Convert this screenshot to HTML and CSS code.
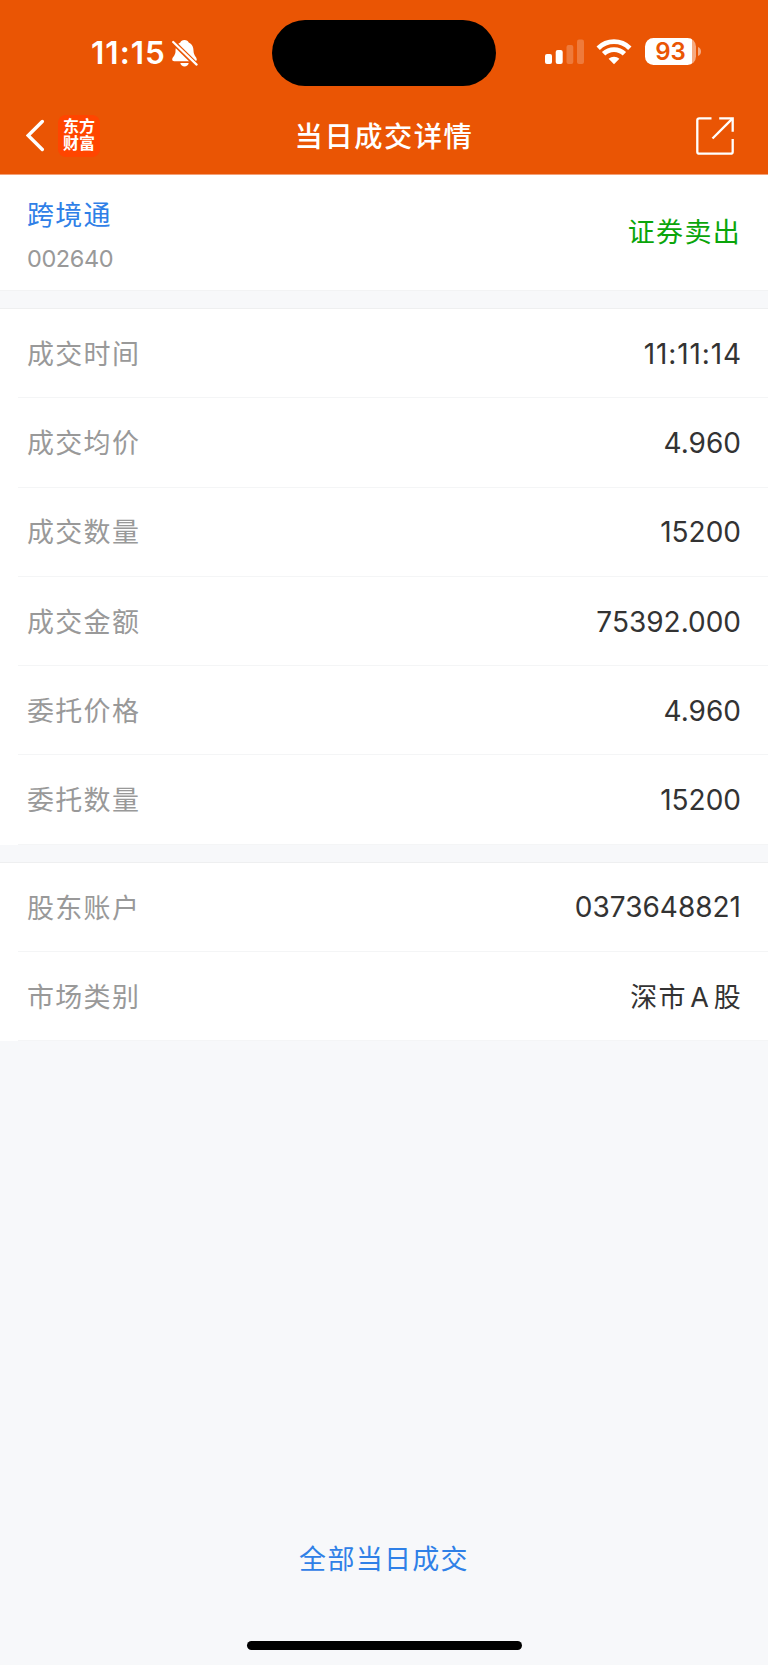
FILE: index.html
```html
<!DOCTYPE html>
<html lang="zh-CN">
<head>
    <meta charset="UTF-8">
    <title>当日成交详情</title>
    <link rel="stylesheet" href="styles.css">
</head>
<body>
<div class="page">
    <header class="header">
        <div class="status">
            <div class="status-left">
                <span class="time">11:15</span>
                <svg class="bell" width="27" height="28" viewBox="0 0 27 28">
                    <path fill="#fff" d="M13.500 1C15.700 1 17.200 2 17.700 3.500C21.400 5 22.500 8.500 22.600 12.500C22.700 16.500 25.800 18.200 25.800 20.500C25.800 21.700 25 22.200 23.800 22.200H3.200C2 22.200 1.200 21.700 1.200 20.500C1.200 18.200 4.400 16.500 4.500 12.500C4.600 8.500 5.600 5 9.300 3.500C9.800 2 11.300 1 13.500 1Z"/>
                    <path fill="#fff" d="M9.300 24H17.700C17.300 26.200 15.600 27.400 13.500 27.400C11.400 27.400 9.700 26.200 9.300 24Z"/>
                    <path stroke="#ea5504" stroke-width="5" d="M0 1L27 27.600"/>
                    <path stroke="#fff" stroke-width="2.200" stroke-linecap="round" d="M2.200 3L25.600 25.600"/>
                </svg>
            </div>
            <div class="island"></div>
            <div class="status-right">
                <svg class="signal" width="40" height="26" viewBox="0 0 40 26">
                    <rect x="0" y="15" width="7" height="10" rx="2" fill="#fff"/>
                    <rect x="10.700" y="11" width="7" height="14" rx="2" fill="#fff"/>
                    <rect x="21.500" y="6" width="6.800" height="19" rx="2" fill="#fff" opacity=".22"/>
                    <rect x="32" y=".5" width="7" height="24.500" rx="2" fill="#fff" opacity=".22"/>
                </svg>
                <svg class="wifi" width="36" height="26" viewBox="0 0 36 26">
                    <g fill="none" stroke="#fff" stroke-width="4.800">
                        <path d="M2.200 9.200A22.500 22.500 0 0 1 33.800 9.200"/>
                        <path d="M7.600 14.800A14.800 14.800 0 0 1 28.400 14.800"/>
                    </g>
                    <path fill="#fff" d="M18 25.200L12.600 19.800C15.600 16.900 20.400 16.900 23.400 19.800Z"/>
                </svg>
                <div class="battery"><span>93</span></div>
                <svg class="nub" width="4" height="9" viewBox="0 0 4 9">
                    <path fill="#fff" opacity=".5" d="M0 0C4 1.500 4 7.500 0 9Z"/>
                </svg>
            </div>
        </div>
        <div class="nav">
            <div class="nav-left">
                <svg width="20" height="34" viewBox="0 0 20 34">
                    <path fill="none" stroke="#fff" stroke-width="3.400" stroke-linecap="round" d="M16.300 2.500L2.200 16.500L16.300 30.500"/>
                </svg>
                <div class="logo"><span>东方</span><span>财富</span></div>
            </div>
            <h1>当日成交详情</h1>
            <svg class="share" width="38" height="38" viewBox="0 0 38 38">
                <g fill="none" stroke="#fff" stroke-width="2.300">
                    <path d="M15.500 1.300H3.300Q1.300 1.300 1.300 3.300V34.700Q1.300 36.700 3.300 36.700H34.700Q36.700 36.700 36.700 34.700V22"/>
                    <path d="M23.200 1.300H36.700V14.800"/>
                    <path d="M36.400 1.600L16.500 21.500"/>
                </g>
            </svg>
        </div>
    </header>

    <div class="stock">
        <div>
            <div class="name">跨境通</div>
            <div class="code">002640</div>
        </div>
        <div class="side">证券卖出</div>
    </div>

    <ul class="list">
        <li><label>成交时间</label><span class="clock">11:11:14</span></li>
        <li><label>成交均价</label><span>4.960</span></li>
        <li><label>成交数量</label><span>15200</span></li>
        <li><label>成交金额</label><span>75392.000</span></li>
        <li><label>委托价格</label><span>4.960</span></li>
        <li><label>委托数量</label><span>15200</span></li>
    </ul>

    <ul class="list">
        <li><label>股东账户</label><span>0373648821</span></li>
        <li><label>市场类别</label><span class="cn">深市<i>A</i>股</span></li>
    </ul>

    <a class="all" href="javascript:;">全部当日成交</a>
    <div class="home"></div>
</div>
</body>
</html>
```
FILE: styles.css
```css
*{
    margin: 0;
    padding: 0;
    box-sizing: border-box;
}
body{
    font-family: Inter, "Noto Sans CJK SC", sans-serif;
    background-color: #f7f8fa;
}
.page{
    display: flex;
    flex-direction: column;
    height: 1665px;
    overflow: hidden;
}
/*顶部*/
.header{
    height: 175px;
    background-color: #ea5504;
    border-bottom: 1px solid #f3a077;
    color: #fff;
}
.status{
    display: grid;
    grid-template-columns: 272px 224px 272px;
    height: 106px;
    padding-top: 20px;
}
.status-left{
    display: flex;
    align-items: center;
    height: 66px;
    padding-left: 91px;
}
.time{
    width: 80px;
    font-size: 31.500px;
    font-weight: 600;
    line-height: 38px;
    letter-spacing: 1px;
}
.island{
    height: 66px;
    border-radius: 33px;
    background-color: #000;
}
.status-right{
    display: flex;
    align-items: center;
    height: 63px;
    padding-left: 49px;
}
.wifi{
    margin-left: 11px;
}
.battery{
    width: 51px;
    height: 27px;
    margin-left: 13px;
    border-radius: 8.500px;
    background: linear-gradient(to right, #fff 47.500px, #f5aa81 47.500px);
    color: #ea5504;
    font-size: 24px;
    font-weight: 600;
    line-height: 28px;
    text-align: center;
}
.nub{
    margin-left: 2px;
}
.nav{
    display: grid;
    grid-template-columns: 1fr auto 1fr;
    align-items: center;
    height: 60px;
    padding: 0 34px 0 26px;
}
.nav-left{
    display: flex;
    align-items: center;
}
.logo{
    display: flex;
    flex-direction: column;
    justify-content: center;
    width: 42px;
    height: 42px;
    margin-left: 12px;
    padding-bottom: 2px;
    border-radius: 8px;
    background-color: #ff4500;
    font-size: 16px;
    font-weight: 700;
    line-height: 17.500px;
    text-align: center;
}
.nav h1{
    padding: 2px 0 0 8px;
    font-size: 28.300px;
    font-weight: 500;
    letter-spacing: 1.500px;
    line-height: 40px;
}
.share{
    justify-self: end;
}
/*股票信息*/
.stock{
    display: flex;
    justify-content: space-between;
    align-items: center;
    height: 116px;
    padding: 0 27px;
    background-color: #fff;
    border-bottom: 1px solid #f2f3f4;
}
.name{
    padding-top: 5px;
    color: #2f80e7;
    font-size: 27px;
    letter-spacing: 1.300px;
    line-height: 40px;
}
.code{
    margin-top: 8px;
    color: #999;
    font-size: 23.500px;
    letter-spacing: -0.400px;
    line-height: 30px;
}
.side{
    padding-bottom: 4px;
    color: #0aa50a;
    font-size: 27px;
    letter-spacing: 1.300px;
}
/*详情列表*/
.list{
    margin-top: 17px;
    border-top: 1px solid #eeeff0;
    background-color: #fff;
    list-style: none;
}
.list li{
    display: flex;
    justify-content: space-between;
    align-items: center;
    height: 89.300px;
    margin-left: 18px;
    padding: 0 27px 0 9px;
    border-bottom: 1px solid #f4f5f6;
}
.list label{
    padding-bottom: 1.500px;
    color: #999;
    font-size: 27px;
    letter-spacing: 1.300px;
}
.list span{
    padding-top: 1px;
    color: #333;
    font-size: 28px;
}
.list .clock{
    letter-spacing: 0.900px;
    margin-right: -1px;
}
.list .cn{
    padding: 0 0 2px;
    font-size: 27px;
    letter-spacing: 1.300px;
    margin-right: -1px;
}
.cn i{
    margin: 0 3.500px;
    font-style: normal;
}
/*底部*/
.all{
    margin: auto auto 61px;
    color: #2f80e7;
    font-size: 27px;
    letter-spacing: 1.300px;
    line-height: 40px;
    text-decoration: none;
}
.home{
    flex: none;
    width: 275px;
    height: 9px;
    margin: 0 auto 15px;
    border-radius: 5px;
    background-color: #000;
}
```
